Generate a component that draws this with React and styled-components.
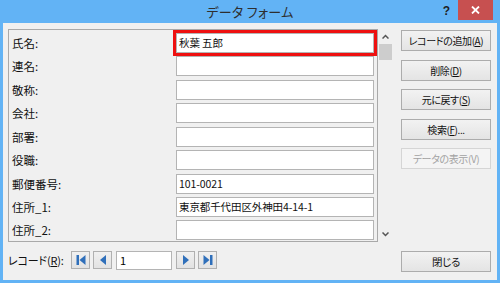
import React from "react";
import styled, { createGlobalStyle } from "styled-components";

const FONT = `"Noto Sans CJK JP", "Noto Sans", sans-serif`;

const fields = [
  { label: "氏名:", value: "秋葉 五郎", highlight: true },
  { label: "連名:" },
  { label: "敬称:" },
  { label: "会社:" },
  { label: "部署:" },
  { label: "役職:" },
  { label: "郵便番号:", value: "101-0021" },
  { label: "住所_1:", value: "東京都千代田区外神田4-14-1" },
  { label: "住所_2:" },
];

const actions = [
  { text: "レコードの追加", key: "A" },
  { text: "削除", key: "D" },
  { text: "元に戻す", key: "S" },
  { text: "検索", key: "F", tail: "..." },
  { text: "データの表示", key: "V", disabled: true },
];

const GlobalStyle = createGlobalStyle`
  html, body {
    margin: 0;
    padding: 0;
  }
  body {
    font-family: ${FONT};
    background: #62b3f5;
  }
`;

const Window = styled.div`
  width: 500px;
  height: 283px;
  box-sizing: border-box;
  padding: 0 3px 3px;
  background: #62b3f5;
  display: flex;
  flex-direction: column;
  font-family: ${FONT};
  font-feature-settings: "palt";
  color: #000;
`;

const TitleBar = styled.div`
  height: 23px;
  display: grid;
  grid-template-columns: 1fr auto 1fr;
  align-items: start;
`;

const Title = styled.div`
  grid-column: 2;
  font-size: 13px;
  line-height: 23px;
  color: #2e2e2e;
  letter-spacing: 0.3px;
`;

const Controls = styled.div`
  justify-self: end;
  display: flex;
  align-items: start;
  margin-right: 4px;
`;

const Help = styled.div`
  font-size: 12px;
  font-weight: bold;
  line-height: 22px;
  color: #1e1e1e;
  margin-right: 8px;
  font-family: "Liberation Sans", sans-serif;
`;

const CloseBox = styled.div`
  width: 35px;
  height: 20px;
  background: #c75050;
  display: flex;
  align-items: center;
  justify-content: center;
`;

const Client = styled.div`
  flex: 1;
  background: #f0f0f0;
  padding: 6px 6px 0 5px;
  display: flex;
  flex-direction: column;
`;

const Top = styled.div`
  display: flex;
  height: 213px;
`;

const Panel = styled.div`
  width: 370px;
  height: 213px;
  box-sizing: border-box;
  border: 1px solid #a9a9a9;
  padding: 3px 3px 0;
  display: grid;
  grid-template-columns: 164px 1fr;
  grid-auto-rows: 20px;
  row-gap: 3.43px;
  align-content: start;
`;

const Label = styled.div`
  font-size: 11.5px;
  line-height: 20px;
  color: #111;
`;

const TextBox = styled.div`
  box-sizing: border-box;
  height: 20px;
  border: 1px solid #b4b4b4;
  background: #fff;
  padding: 0 2px;
  font-size: 10.5px;
  letter-spacing: -0.1px;
  line-height: 18px;
  color: #111;
  white-space: nowrap;
  outline: ${(p) => (p.$highlight ? "3px solid #ee1010" : "none")};
`;

const ScrollBar = styled.div`
  width: 15px;
  height: 213px;
  display: flex;
  flex-direction: column;
`;

const ScrollArrow = styled.div`
  height: 15px;
  display: flex;
  align-items: center;
  justify-content: center;
`;

const Thumb = styled.div`
  height: 16px;
  margin: 0 1px 0 1px;
  background: #cdcdcd;
`;

const Track = styled.div`
  flex: 1;
`;

const ButtonColumn = styled.div`
  margin-left: 8px;
  padding-top: 1px;
  display: flex;
  flex-direction: column;
  gap: 8.5px;
`;

const Button = styled.div`
  width: 90px;
  height: 21px;
  box-sizing: border-box;
  border: 1px solid ${(p) => (p.$disabled ? "#d5d5d5" : "#acacac")};
  background: ${(p) =>
    p.$disabled ? "#f4f4f4" : "linear-gradient(#f2f2f2, #e4e4e4)"};
  color: ${(p) => (p.$disabled ? "#a2a2a2" : "#111")};
  font-size: 10px;
  letter-spacing: -0.4px;
  line-height: 19px;
  text-align: center;
  white-space: nowrap;
`;

const Key = styled.span`
  text-decoration: ${(p) => (p.$disabled ? "none" : "underline")};
`;

const Bottom = styled.div`
  margin-top: 9px;
  display: flex;
  align-items: flex-start;
`;

const RecordLabel = styled.div`
  width: 63px;
  font-size: 11px;
  letter-spacing: -0.2px;
  line-height: 19px;
  color: #111;
  white-space: nowrap;
`;

const Nav = styled.div`
  display: flex;
  gap: 3px;
  align-items: flex-start;
`;

const NavButton = styled.div`
  width: 19px;
  height: 18px;
  box-sizing: border-box;
  border: 1px solid #b0b0b0;
  background: linear-gradient(#f0f0f0, #e2e2e2);
  display: flex;
  align-items: center;
  justify-content: center;
`;

const RecordInput = styled.div`
  width: 56px;
  height: 19px;
  box-sizing: border-box;
  border: 1px solid #b4b4b4;
  background: #fff;
  padding: 0 3px;
  font-size: 11px;
  line-height: 17px;
  margin: 0 1px;
`;

const CloseButton = styled(Button)`
  margin-left: auto;
  font-size: 10.5px;
`;

const Chevron = ({ up }) => (
  <svg width="7" height="5" viewBox="0 0 7 5">
    <polyline
      points={up ? "0.5,4.5 3.5,1.5 6.5,4.5" : "0.5,0.5 3.5,3.5 6.5,0.5"}
      fill="none"
      stroke="#555"
      strokeWidth="1.5"
    />
  </svg>
);

const NavIcon = ({ dir, bar }) => (
  <svg width="10" height="10" viewBox="0 0 10 10">
    {dir === "left" ? (
      <>
        {bar && <rect x="0.5" y="0" width="2.5" height="10" fill="#2f6fba" />}
        <polygon points={bar ? "3.5,5 9.5,0 9.5,10" : "2,5 8,0 8,10"} fill="#2f6fba" />
      </>
    ) : (
      <>
        <polygon points={bar ? "0.5,0 6.5,5 0.5,10" : "2,0 8,5 2,10"} fill="#2f6fba" />
        {bar && <rect x="7" y="0" width="2.5" height="10" fill="#2f6fba" />}
      </>
    )}
  </svg>
);

export default function App() {
  return (
    <Window>
      <GlobalStyle />
      <TitleBar>
        <Title>データ フォーム</Title>
        <Controls>
          <Help>?</Help>
          <CloseBox>
            <svg width="9" height="8" viewBox="0 0 9 8">
              <path d="M1 0.5 L8 7.5 M8 0.5 L1 7.5" stroke="#fff" strokeWidth="1.8" />
            </svg>
          </CloseBox>
        </Controls>
      </TitleBar>

      <Client>
        <Top>
          <Panel>
            {fields.map((f) => (
              <React.Fragment key={f.label}>
                <Label>{f.label}</Label>
                <TextBox $highlight={f.highlight}>{f.value}</TextBox>
              </React.Fragment>
            ))}
          </Panel>
          <ScrollBar>
            <ScrollArrow>
              <Chevron up />
            </ScrollArrow>
            <Thumb />
            <Track />
            <ScrollArrow>
              <Chevron />
            </ScrollArrow>
          </ScrollBar>
          <ButtonColumn>
            {actions.map((a) => (
              <Button key={a.key} $disabled={a.disabled}>
                {a.text}(<Key $disabled={a.disabled}>{a.key}</Key>){a.tail}
              </Button>
            ))}
          </ButtonColumn>
        </Top>

        <Bottom>
          <RecordLabel>
            レコード(<Key>R</Key>):
          </RecordLabel>
          <Nav>
            <NavButton>
              <NavIcon dir="left" bar />
            </NavButton>
            <NavButton>
              <NavIcon dir="left" />
            </NavButton>
            <RecordInput>1</RecordInput>
            <NavButton>
              <NavIcon dir="right" />
            </NavButton>
            <NavButton>
              <NavIcon dir="right" bar />
            </NavButton>
          </Nav>
          <CloseButton>閉じる</CloseButton>
        </Bottom>
      </Client>
    </Window>
  );
}
